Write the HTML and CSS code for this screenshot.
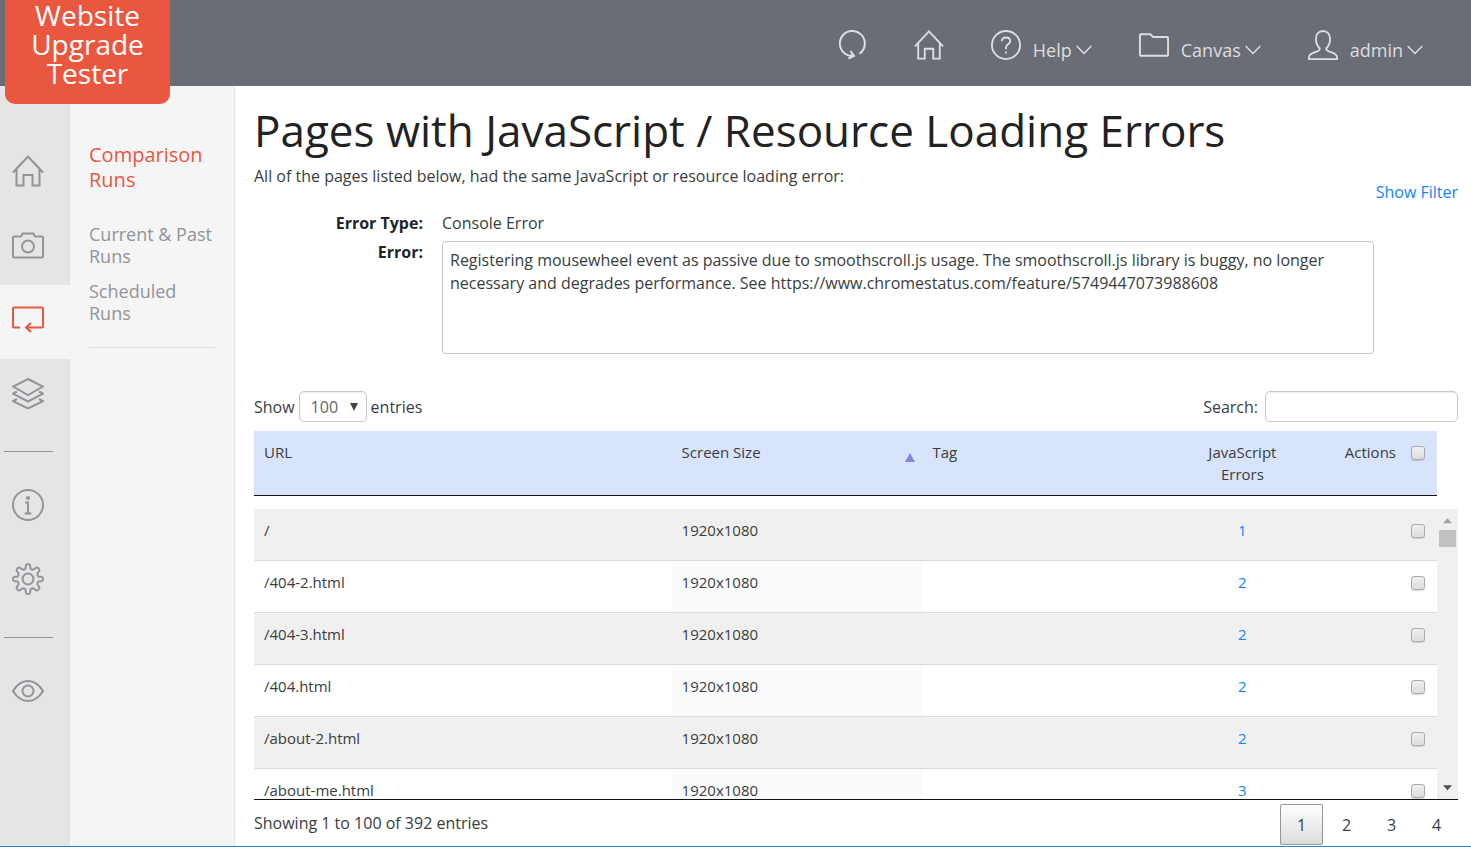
FILE: index.html
```html
<!DOCTYPE html>
<html lang="en">
<head>
<meta charset="utf-8">
<title>Website Upgrade Tester</title>
<link rel="stylesheet" href="styles.css">
</head>
<body>
<svg class="sprite" aria-hidden="true">
  <symbol id="i-home" viewBox="0 0 32 32"><path d="M1 17.500 16 1.500 31 17.500M4.500 14V30.500H11.500V20H20.500V30.500H27.500V14"/></symbol>
  <symbol id="i-chevron" viewBox="0 0 16 10"><path d="M.7 1 8 8.500 15.300 1"/></symbol>
</svg>
<div class="page">
  <header class="topbar">
    <a class="logo" href="#">Website Upgrade Tester</a>
    <nav class="topnav" aria-label="Main">
      <a class="topnav-item" href="#" aria-label="Refresh"><svg class="nav-icon refresh" viewBox="0 0 28 30"><path d="M20.500 23.700A12.500 12.500 0 1 0 9 25.200L14.500 25.800M11.500 21 15 25.800 9.500 28.500"/></svg></a>
      <a class="topnav-item" href="#" aria-label="Home"><svg class="nav-icon"><use href="#i-home"/></svg></a>
      <button class="topnav-item" type="button"><svg class="nav-icon" viewBox="0 0 32 32"><circle cx="16" cy="16" r="15"/><path d="M11.500 12C11.500 9.500 13.500 8 16 8S20.500 9.500 20.500 12C20.500 15 16 15.500 16 18.500V20.500M16 22.800V25"/></svg><span class="nav-label">Help<svg class="chevron"><use href="#i-chevron"/></svg></span></button>
      <button class="topnav-item" type="button"><svg class="nav-icon" viewBox="0 0 32 32"><path d="M2 4.500H12L15 7.500H30Q31 7.500 31 8.500V26.500Q31 27.500 30 27.500H2Q1 27.500 1 26.500V5.500Q1 4.500 2 4.500Z"/></svg><span class="nav-label">Canvas<svg class="chevron"><use href="#i-chevron"/></svg></span></button>
      <button class="topnav-item" type="button"><svg class="nav-icon" viewBox="0 0 32 32"><path d="M12.500 19.500C10 17 8.500 13 8.500 9.500C8.500 4.500 11.500 1 16 1S23.500 4.500 23.500 9.500C23.500 13 22 17 19.500 19.500C19 22 21 22.500 24 23.500C28 25 31 26 31 29V31H1V29C1 26 4 25 8 23.500C11 22.500 13 22 12.500 19.500Z"/></svg><span class="nav-label">admin<svg class="chevron"><use href="#i-chevron"/></svg></span></button>
    </nav>
  </header>
  <div class="body">
    <nav class="rail" aria-label="Sections">
      <a class="rail-item" href="#" aria-label="Home"><svg class="rail-icon"><use href="#i-home"/></svg></a>
      <a class="rail-item" href="#" aria-label="Screenshots"><svg class="rail-icon" viewBox="0 0 32 32"><path d="M2 7.500H8Q9.500 7.500 10 6L10.500 4.500H21.500L22 6Q22.500 7.500 24 7.500H30Q31 7.500 31 8.500V27.500Q31 28.500 30 28.500H2Q1 28.500 1 27.500V8.500Q1 7.500 2 7.500Z"/><circle cx="16" cy="17.500" r="6"/></svg></a>
      <a class="rail-item active" href="#" aria-label="Comparison runs"><svg class="rail-icon" viewBox="0 0 32 32"><path d="M8 24.500H2Q1 24.500 1 23.500V5.500Q1 4.500 2 4.500H30Q31 4.500 31 5.500V23.500Q31 24.500 30 24.500H14M19 20 14 24.500 19 29"/></svg></a>
      <a class="rail-item" href="#" aria-label="Layers"><svg class="rail-icon" viewBox="0 0 32 32"><path d="M16 2 31 9.500 16 18 1 9.500ZM5 14.500 1 16.700 16 24.500 31 16.700 27 14.500M5 22 1 24.200 16 31.500 31 24.200 27 22"/></svg></a>
      <hr class="rail-line">
      <a class="rail-item" href="#" aria-label="Information"><svg class="rail-icon" viewBox="0 0 32 32"><circle cx="16" cy="16" r="15"/><path d="M13 13.500H16V24M12.700 24.500H19.300"/><circle class="dot" cx="16" cy="9" r="2"/></svg></a>
      <a class="rail-item" href="#" aria-label="Settings"><svg class="rail-icon" viewBox="0 0 32 32"><path d="M13.500 5.500 14 2Q14.200 1 16 1T18 2L18.500 5.500Q19.500 7 21.500 6.500L24.300 4.700Q25.500 4.300 26.600 5.400T27.300 7.700L25.500 10.500Q25 12.500 26.500 13.500L30 14Q31 14.200 31 16T30 18L26.500 18.500Q25 19.500 25.500 21.500L27.300 24.300Q27.700 25.500 26.600 26.600T24.300 27.300L21.500 25.500Q19.500 25 18.500 26.500L18 30Q17.800 31 16 31T14 30L13.500 26.500Q12.500 25 10.500 25.500L7.700 27.300Q6.500 27.700 5.400 26.600T4.700 24.300L6.500 21.500Q7 19.500 5.500 18.500L2 18Q1 17.800 1 16T2 14L5.500 13.500Q7 12.500 6.500 10.500L4.700 7.700Q4.300 6.500 5.400 5.400T7.700 4.700L10.500 6.500Q12.500 7 13.500 5.500Z"/><circle cx="16" cy="16" r="5.500"/></svg></a>
      <hr class="rail-line">
      <a class="rail-item" href="#" aria-label="View"><svg class="rail-icon" viewBox="0 0 32 32"><path d="M1 16C5 9.500 10 6 16 6S27 9.500 31 16C27 22.500 22 26 16 26S5 22.500 1 16Z"/><circle cx="16" cy="16" r="5.500"/></svg></a>
    </nav>
    <nav class="submenu" aria-label="Comparison Runs">
      <h2 class="submenu-title">Comparison Runs</h2>
      <a class="submenu-link" href="#">Current &amp; Past Runs</a>
      <a class="submenu-link" href="#">Scheduled Runs</a>
      <hr class="submenu-line">
    </nav>
    <main class="main">
      <h1 class="title">Pages with JavaScript / Resource Loading Errors</h1>
      <div class="intro">
        <p class="intro-text">All of the pages listed below, had the same JavaScript or resource loading error:</p>
        <a class="filter" href="#">Show Filter</a>
      </div>
      <div class="details">
        <span class="details-label">Error Type:</span>
        <span>Console Error</span>
        <label class="details-label" for="error">Error:</label>
        <textarea class="error-box" id="error">Registering mousewheel event as passive due to smoothscroll.js usage. The smoothscroll.js library is buggy, no longer necessary and degrades performance. See https://www.chromestatus.com/feature/5749447073988608</textarea>
      </div>
      <div class="controls">
        <div class="length"><label for="length">Show</label><select class="length-select" id="length"><option>100</option></select><span>entries</span></div>
        <div class="search"><label for="search">Search:</label><input class="search-input" id="search" type="search"></div>
      </div>
      <div class="head-wrap">
        <table class="grid grid-head">
          <colgroup><col class="c-url"><col class="c-size"><col class="c-tag"><col class="c-errors"><col class="c-actions"></colgroup>
          <thead><tr><th>URL</th><th class="size"><span class="sorted">Screen Size<svg class="sort" viewBox="0 0 12 10"><path d="M6 0 11.500 10H.5Z"/></svg></span></th><th>Tag</th><th class="num">JavaScript<br>Errors</th><th><span class="actions"><label for="all">Actions</label><input class="tick" id="all" type="checkbox"></span></th></tr></thead>
        </table>
      </div>
      <div class="scroller">
        <div class="rows">
          <table class="grid grid-body">
            <colgroup><col class="c-url"><col class="c-size"><col class="c-tag"><col class="c-errors"><col class="c-actions"></colgroup>
            <tbody>
              <tr><td>/</td><td>1920x1080</td><td></td><td class="num"><a href="#">1</a></td><td><span class="actions"><input class="tick" type="checkbox" aria-label="Select /"></span></td></tr>
              <tr><td>/404-2.html</td><td>1920x1080</td><td></td><td class="num"><a href="#">2</a></td><td><span class="actions"><input class="tick" type="checkbox" aria-label="Select /404-2.html"></span></td></tr>
              <tr><td>/404-3.html</td><td>1920x1080</td><td></td><td class="num"><a href="#">2</a></td><td><span class="actions"><input class="tick" type="checkbox" aria-label="Select /404-3.html"></span></td></tr>
              <tr><td>/404.html</td><td>1920x1080</td><td></td><td class="num"><a href="#">2</a></td><td><span class="actions"><input class="tick" type="checkbox" aria-label="Select /404.html"></span></td></tr>
              <tr><td>/about-2.html</td><td>1920x1080</td><td></td><td class="num"><a href="#">2</a></td><td><span class="actions"><input class="tick" type="checkbox" aria-label="Select /about-2.html"></span></td></tr>
              <tr><td>/about-me.html</td><td>1920x1080</td><td></td><td class="num"><a href="#">3</a></td><td><span class="actions"><input class="tick" type="checkbox" aria-label="Select /about-me.html"></span></td></tr>
            </tbody>
          </table>
        </div>
        <div class="scrollbar" aria-hidden="true">
          <svg class="arrow up" viewBox="0 0 10 6"><path d="M5 0 10 5.500H0Z"/></svg>
          <div class="thumb"></div>
          <svg class="arrow down" viewBox="0 0 10 6"><path d="M5 5.500 0 0H10Z"/></svg>
        </div>
      </div>
      <div class="footer">
        <span>Showing 1 to 100 of 392 entries</span>
        <nav class="pager" aria-label="Pagination">
          <button class="pager-button current" type="button">1</button>
          <button class="pager-button" type="button">2</button>
          <button class="pager-button" type="button">3</button>
          <button class="pager-button" type="button">4</button>
        </nav>
      </div>
    </main>
  </div>
</div>
</body>
</html>
```
FILE: styles.css
```css
* { box-sizing: border-box; }
body {
  margin: 0;
  background: #fff;
  color: #3a3d40;
  font: 16px/24px "Open Sans", sans-serif;
}
a { color: #1585f5; text-decoration: none; }
button, input, select, textarea { font: inherit; color: inherit; }
svg { display: block; fill: none; stroke: currentColor; }
.sprite { position: absolute; width: 0; height: 0; }
.page {
  display: flex;
  flex-direction: column;
  height: 100vh;
  border-bottom: 1px solid #1a87d7;
}

/* Top bar */
.topbar {
  position: relative;
  flex: none;
  height: 86px;
  padding: 30px 48px 0 200px;
  background: #6a6d76;
}
.logo {
  position: absolute;
  top: 0;
  left: 5px;
  width: 165px;
  height: 104px;
  padding: 1px 20px 0;
  border-radius: 0 0 10px 10px;
  background: #e9573f;
  color: #fff;
  font-size: 28px;
  line-height: 29px;
  text-align: center;
}
.topnav { display: flex; justify-content: flex-end; gap: 47px; }
.topnav-item {
  display: flex;
  align-items: flex-start;
  gap: 12px;
  padding: 0;
  border: 0;
  background: none;
  color: #dedede;
  font-size: 18px;
}
.nav-icon { width: 30px; height: 30px; stroke-width: 2; }
.nav-icon.refresh { width: 28px; }
.nav-label { display: flex; align-items: center; gap: 4px; padding-top: 8px; }
.chevron { width: 16px; height: 10px; stroke-width: 1.5; }

/* Icon rail and section menu */
.body { display: flex; flex: 1; min-height: 0; }
.rail { flex: none; width: 70px; padding-top: 51px; background: #e5e5e5; }
.rail-item { display: block; height: 74px; padding: 18px 12px; color: #919499; }
.rail-item.active { background: #f5f5f5; color: #e9573f; }
.rail-icon { width: 32px; height: 32px; stroke-width: 2; }
.rail-icon .dot { fill: currentColor; stroke: none; }
.rail-line { width: 49px; margin: 18px 0 19px 4px; border: 0; border-top: 1px solid #919499; }
.submenu {
  flex: none;
  width: 165px;
  padding: 56px 19px;
  border-right: 1px solid #e5e5e5;
  background: #f5f5f5;
}
.submenu-title { margin: 0 0 31px; color: #e9573f; font-size: 20px; font-weight: 400; line-height: 25px; }
.submenu-link { display: block; margin-bottom: 13px; color: #919499; font-size: 18px; line-height: 22px; }
.submenu-line { margin: 23px 0 0; border: 0; border-top: 1px solid #dcdcdc; }

/* Main content */
.main {
  display: flex;
  flex: 1;
  flex-direction: column;
  min-width: 0;
  padding: 19px 13px 0 19px;
}
.title { margin: 0 0 9px; color: #222; font-size: 44px; font-weight: 400; line-height: 50px; }
.intro { display: flex; justify-content: space-between; gap: 20px; }
.intro-text { margin: 0; }
.filter { padding-top: 16px; }
.details {
  display: grid;
  grid-template-columns: 169px 1fr;
  gap: 5px 19px;
  padding: 7px 84px 0 0;
}
.details-label { color: #212529; font-weight: 700; text-align: right; }
.error-box {
  display: block;
  width: 100%;
  height: 113px;
  margin-top: 1px;
  padding: 7px;
  border: 1px solid #c3c6c9;
  border-radius: 4px;
  line-height: 23px;
  resize: none;
}
.controls { display: flex; justify-content: space-between; margin: 37px 0 9px; }
.length, .search { display: flex; align-items: center; gap: 4px; }
.search { gap: 7px; }
.length-select, .search-input {
  height: 31px;
  border: 1px solid #c8c8c8;
  border-radius: 5px;
  background: #fff;
  box-shadow: inset 0 1px 1px rgba(0, 0, 0, .08);
}
.length-select {
  width: 68px;
  padding: 0 11px;
  appearance: none;
  background: #fff url("data:image/svg+xml,%3Csvg xmlns='http://www.w3.org/2000/svg' width='8' height='8'%3E%3Cpath d='M0 0h8L4 8z' fill='%23444'/%3E%3C/svg%3E") no-repeat right 8px center;
  color: #666;
}
.search-input { width: 193px; padding: 0 8px; }

/* Results table */
.head-wrap { padding-right: 21px; }
.grid { width: 100%; border-collapse: separate; border-spacing: 0; table-layout: fixed; font-size: 15px; line-height: 22px; }
.c-url { width: 35.3%; }
.c-size { width: 21.2%; }
.c-tag { width: 20.7%; }
.c-errors { width: 12.7%; }
.c-actions { width: 10.1%; }
.grid th, .grid td { padding: 10px 10px 9px; text-align: left; vertical-align: top; }
.grid .num { text-align: center; }
.grid th { border-bottom: 1px solid #111; background: #d8e4fb; font-weight: 400; }
.grid .size { padding-right: 6px; }
.grid td { height: 52px; border-bottom: 1px solid #dcdcdc; }
.grid tr:nth-child(odd) td { background: #f0f0f0; }
.grid tr:nth-child(even) td:nth-child(2) { background: #fafafa; }
.sorted { display: flex; justify-content: space-between; align-items: center; }
.sort { width: 12px; height: 9px; margin-top: 11px; fill: #8584de; stroke: none; }
.actions { display: flex; justify-content: flex-end; align-items: center; gap: 15px; height: 22px; padding-right: 2px; }
.tick {
  width: 14px;
  height: 14px;
  margin: 2px 0 0;
  appearance: none;
  border: 1px solid #aaa;
  border-radius: 3px;
  background: linear-gradient(#f0f0f0, #dcdcdc);
  box-shadow: 0 1px 1px rgba(0, 0, 0, .15);
}
.grid-head th { height: 65px; }
.scroller {
  display: flex;
  flex: 1;
  min-height: 0;
  margin-top: 13px;
  border-bottom: 1px solid #111;
}
.rows { flex: 1; min-width: 0; overflow: hidden; }
.scrollbar { display: flex; flex-direction: column; flex: none; width: 21px; padding: 9px 2px 8px; background: #f0f0f0; }
.arrow { width: 9px; height: 6px; margin: 0 4px; stroke: none; fill: #a3a3a3; }
.arrow.down { margin-top: auto; fill: #505050; }
.thumb { height: 17px; margin-top: 6px; background: #c1c1c1; }

.footer { display: flex; justify-content: space-between; align-items: flex-start; height: 46px; padding-top: 4px; }
.footer > span { padding-top: 7px; }
.pager { display: flex; gap: 2px; }
.pager-button { width: 43px; height: 41px; padding: 0; border: 1px solid transparent; border-radius: 2px; background: none; }
.pager-button.current { border-color: #979797; background: linear-gradient(#fff, #dcdcdc); }
```
